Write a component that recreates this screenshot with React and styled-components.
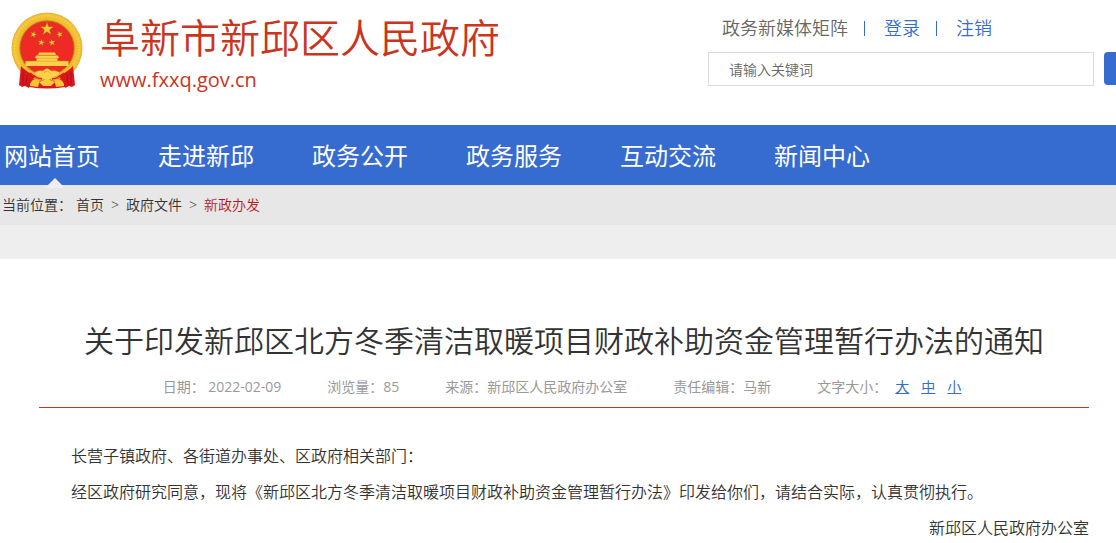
import React, { useState } from 'react';
import styled, { createGlobalStyle } from 'styled-components';

const GlobalStyle = createGlobalStyle`
  * {
    box-sizing: border-box;
  }

  body {
    margin: 0;
    background-color: #fff;
    color: #333;
    font-family: "Open Sans", "Noto Sans CJK SC", sans-serif;
    font-size: 14px;
    overflow-x: hidden;
  }

  a {
    color: inherit;
    text-decoration: none;
  }
`

const Header = styled.header`
  display: flex;
  justify-content: space-between;
  height: 125px;
  padding-left: 10px;
  overflow: hidden;
`

const Brand = styled.a`
  display: flex;
  gap: 16px;
  padding-top: 12px;
  color: #c9351e;

  svg {
    flex: none;
    width: 74px;
    height: 78px;
  }
`

const SiteName = styled.h1`
  margin: 0;
  font-size: 40px;
  font-weight: 350;
  line-height: 52px;
  white-space: nowrap;
`

const SiteUrl = styled.div`
  font-size: 20px;
  line-height: 32px;
`

const Tools = styled.div`
  flex: 0 0 408px;
  min-width: 0;
  padding-top: 14px;
`

const UserLinks = styled.div`
  display: flex;
  align-items: center;
  gap: 16px;
  padding-left: 14px;
  font-size: 18px;
  font-weight: 350;
  line-height: 28px;
  white-space: nowrap;
`

const UserLink = styled.a`
  color: ${props => props.$plain ? '#666' : '#366bd0'};
`

const Bar = styled.span`
  width: 1px;
  height: 15px;
  margin-right: 3px;
  background-color: #366bd0;
`

const SearchForm = styled.form`
  display: flex;
  gap: 10px;
  margin-top: 10px;
`

const SearchInput = styled.input`
  flex: 0 0 386px;
  height: 34px;
  padding: 0 20px;
  border: 1px solid #dcdcdc;
  border-radius: 0;
  font-family: inherit;
  font-size: 14px;
  font-weight: 350;
  outline: none;

  &::placeholder {
    color: #666;
  }
`

const SearchButton = styled.button`
  flex: 0 0 80px;
  height: 33px;
  border: 0;
  border-radius: 4px;
  background-color: #366bd0;
`

const Nav = styled.nav`
  display: flex;
  gap: 58px;
  height: 60px;
  padding-left: 4px;
  background-color: #366bd0;
`

const NavItem = styled.a`
  position: relative;
  color: #fff;
  font-size: 24px;
  line-height: 62px;
  white-space: nowrap;

  &.active::after {
    content: '';
    position: absolute;
    left: 50%;
    bottom: -3px;
    margin-left: -7px;
    border: 10px solid transparent;
    border-top-width: 0;
    border-bottom-color: #eee;
  }
`

const Crumbs = styled.div`
  display: flex;
  height: 40px;
  padding-left: 2px;
  background-color: #e7e7e7;
  font-weight: 350;
  line-height: 40px;

  .current {
    color: #b61c1c;
  }
`

const CrumbLabel = styled.span`
  margin-right: 4px;
`

const Arrow = styled.span`
  margin: 0 7px;
`

const Spacer = styled.div`
  height: 34px;
  background-color: #eee;
`

const Article = styled.article`
  margin: 0 27px 0 39px;
  padding-top: 60px;
`

const Title = styled.h2`
  margin: 0;
  font-size: 30px;
  font-weight: 350;
  line-height: 44px;
  text-align: center;
`

const Meta = styled.div`
  display: flex;
  justify-content: center;
  gap: 46px;
  padding: 10px 4px 6px 0;
  border-bottom: 1px solid #c9351e;
  color: #999;
  line-height: 28px;
`

const SizeLinks = styled.span`
  display: flex;
  gap: 12px;
`

const SizeLabel = styled.span`
  margin-right: -4px;
`

const SizeLink = styled.a`
  color: #366bd0;
  text-decoration: underline;
`

const Content = styled.div`
  padding-top: 30px;
  font-size: ${props => props.$size}px;
  line-height: 36px;
`

const Paragraph = styled.p`
  margin: 0;
  font-weight: 350;
  text-indent: ${props => props.$sign ? 0 : '2em'};
  text-align: ${props => props.$sign ? 'right' : 'left'};
`

const menus = ['网站首页', '走进新邱', '政务公开', '政务服务', '互动交流', '新闻中心'];

const sizes = [
  { label: '大', size: 18 },
  { label: '中', size: 16 },
  { label: '小', size: 14 },
];

const star = "M0 -10 L2.4 -3.2 L9.5 -3.1 L3.8 1.2 L5.9 8.1 L0 4 L-5.9 8.1 L-3.8 1.2 L-9.5 -3.1 L-2.4 -3.2 Z";

function Emblem() {
  return (
    <svg viewBox="0 0 74 78" aria-hidden="true">
      <defs>
        <radialGradient id="gold" cx="50%" cy="50%" r="50%">
          <stop offset="74%" stopColor="#c98a10" />
          <stop offset="80%" stopColor="#f0b92c" />
          <stop offset="92%" stopColor="#f8cd45" />
          <stop offset="100%" stopColor="#e5ae28" />
        </radialGradient>
      </defs>
      <circle cx="37" cy="36" r="35.5" fill="url(#gold)" />
      <circle cx="37" cy="36" r="31.5" fill="none" stroke="#e0a41c" strokeWidth="4" strokeDasharray="1 2" opacity="0.25" />
      <circle cx="37" cy="36" r="27" fill="#ed2a24" stroke="#b57410" strokeWidth="0.7" />
      <g fill="#f9c936" stroke="#a9660e" strokeWidth="0.8">
        <path d={star} transform="translate(37 17) scale(.7)" />
        <path d={star} transform="translate(23.5 22.5) rotate(20) scale(.35)" />
        <path d={star} transform="translate(49.7 22.5) rotate(-20) scale(.35)" />
        <path d={star} transform="translate(31.3 30.5) rotate(10) scale(.35)" />
        <path d={star} transform="translate(42 30.5) rotate(-10) scale(.35)" />
      </g>
      <path d="M29 40.5 H45 L46 43 H28 Z M26 43.5 H48 L49 46 H47.5 V49 H58.5 V54 H15.5 V49 H26.5 V46 H25 Z" fill="#fbd24a" />
      <path d="M28 43.2 H46 M27 46.3 H47 M16 49.2 H58" stroke="#d9911a" strokeWidth="0.5" />
      <path d="M11 54 C14 57 18 61 26 64 L21 69 L19 76 L15 74 L12 75 L9 73 Z" fill="#d8161b" />
      <path d="M63 54 C60 57 56 61 48 64 L53 69 L55 76 L59 74 L62 75 L65 73 Z" fill="#d8161b" />
      <path d="M13 60 L13 73 M17 63 L16 73 M61 60 L61 73 M57 63 L58 73" stroke="#a30f12" strokeWidth="0.7" />
      <path d="M19 70 C24 65 28 66 31 69 C35 66 39 66 43 69 C46 66 50 65 55 70 L55 75 C43 77 31 77 19 75 Z" fill="#d8161b" />
      <path d="M20 72 C22 67 26 66 30 68 L28 75 L20 74 Z M54 72 C52 67 48 66 44 68 L46 75 L54 74 Z" fill="#f6c534" />
      <path d="M24 61 C29 57 32 60 34 58 Q37 55 40 58 C42 60 45 57 50 61 C47 66 42 64 41 67 Q37 70 33 67 C32 64 27 66 24 61 Z" fill="#fbd24a" stroke="#dc9c1c" strokeWidth="0.5" />
      <path d="M34 61 Q37 57.5 40 61" fill="none" stroke="#dc9c1c" strokeWidth="0.6" />
      <path d="M29 70 Q37 65 45 70 L41 74 H33 Z" fill="#f8ca3b" />
      <path d="M20 61 C24 64 27 67 32 67 M54 61 C50 64 47 67 42 67" fill="none" stroke="#e31d1c" strokeWidth="1.4" />
    </svg>
  );
}

function App() {
  const [fontSize, setFontSize] = useState(16);

  const changeSize = (e, size) => {
    e.preventDefault();
    setFontSize(size);
  };

  return (
    <>
      <GlobalStyle />
      <Header>
        <Brand href="#">
          <Emblem />
          <div>
            <SiteName>阜新市新邱区人民政府</SiteName>
            <SiteUrl>www.fxxq.gov.cn</SiteUrl>
          </div>
        </Brand>
        <Tools>
          <UserLinks>
            <UserLink href="#" $plain>政务新媒体矩阵</UserLink>
            <Bar />
            <UserLink href="#">登录</UserLink>
            <Bar />
            <UserLink href="#">注销</UserLink>
          </UserLinks>
          <SearchForm onSubmit={e => e.preventDefault()}>
            <SearchInput type="text" placeholder="请输入关键词" aria-label="请输入关键词" />
            <SearchButton type="submit" aria-label="搜索" />
          </SearchForm>
        </Tools>
      </Header>
      <Nav>
        {menus.map((menu, index) => (
          <NavItem href="#" key={menu} className={index === 0 ? 'active' : ''}>{menu}</NavItem>
        ))}
      </Nav>
      <Crumbs>
        <CrumbLabel>当前位置：</CrumbLabel>
        <a href="#">首页</a>
        <Arrow>&gt;</Arrow>
        <a href="#">政府文件</a>
        <Arrow>&gt;</Arrow>
        <a href="#" className="current">新政办发</a>
      </Crumbs>
      <Spacer />
      <Article>
        <Title>关于印发新邱区北方冬季清洁取暖项目财政补助资金管理暂行办法的通知</Title>
        <Meta>
          <span>日期： 2022-02-09</span>
          <span>浏览量：85</span>
          <span>来源：新邱区人民政府办公室</span>
          <span>责任编辑：马新</span>
          <SizeLinks>
            <SizeLabel>文字大小：</SizeLabel>
            {sizes.map(item => (
              <SizeLink href="#" key={item.label} onClick={e => changeSize(e, item.size)}>{item.label}</SizeLink>
            ))}
          </SizeLinks>
        </Meta>
        <Content $size={fontSize}>
          <Paragraph>长营子镇政府、各街道办事处、区政府相关部门：</Paragraph>
          <Paragraph>经区政府研究同意，现将《新邱区北方冬季清洁取暖项目财政补助资金管理暂行办法》印发给你们，请结合实际，认真贯彻执行。</Paragraph>
          <Paragraph $sign>新邱区人民政府办公室</Paragraph>
        </Content>
      </Article>
    </>
  );
}

export default App;
